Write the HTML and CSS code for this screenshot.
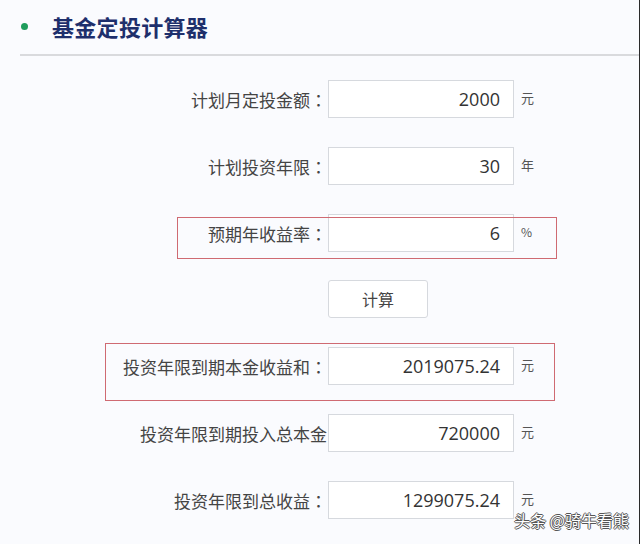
FILE: index.html
```html
<!DOCTYPE html>
<html>
<head>
    <meta charset="utf-8">
    <title>基金定投计算器</title>
    <link rel="stylesheet" href="styles.css">
</head>
<body>
    <div class="page">
        <div class="header">
            <span class="dot"></span>
            <h1>基金定投计算器</h1>
        </div>

        <div class="form">
            <div class="row">
                <label>计划月定投金额<span class="colon">：</span></label>
                <div class="field">2000</div>
                <span class="unit">元</span>
            </div>
            <div class="row">
                <label>计划投资年限<span class="colon">：</span></label>
                <div class="field">30</div>
                <span class="unit">年</span>
            </div>
            <div class="row">
                <span class="mark mark-rate"></span>
                <label>预期年收益率<span class="colon">：</span></label>
                <div class="field">6</div>
                <span class="unit unit-pct">%</span>
            </div>
            <div class="row row-btn">
                <button class="calc-btn">计算</button>
            </div>
            <div class="row">
                <span class="mark mark-total"></span>
                <label>投资年限到期本金收益和<span class="colon">：</span></label>
                <div class="field">2019075.24</div>
                <span class="unit">元</span>
            </div>
            <div class="row">
                <label>投资年限到期投入总本金</label>
                <div class="field">720000</div>
                <span class="unit">元</span>
            </div>
            <div class="row">
                <label>投资年限到总收益<span class="colon">：</span></label>
                <div class="field">1299075.24</div>
                <span class="unit">元</span>
            </div>
        </div>

        <div class="watermark">头条 @骑牛看熊</div>
    </div>
</body>
</html>
```

FILE: styles.css
```css
body { margin: 0; background: #fafbfe; font-family: "Open Sans", "Noto Sans CJK SC", sans-serif; color: #333; }
.page { position: relative; width: 639px; height: 544px; border-right: 1px solid #2a2a2a; overflow: hidden; }

.header { display: flex; align-items: center; height: 54px; margin-left: 20px; border-bottom: 2px solid #d9dadd; }
.dot { width: 7px; height: 7px; border-radius: 50%; background: #1f9d5c; margin-left: 1px; margin-top: -1px; }
.header h1 { margin: 0 0 0 24px; font-size: 22px; font-weight: bold; color: #1e2f6c; font-family: "Noto Sans CJK SC", sans-serif; letter-spacing: 0.3px; margin-top: -2px; }

.form { padding-top: 24px; }
.row { position: relative; display: flex; align-items: center; height: 38px; margin-bottom: 29px; }
.row label { width: 327px; text-align: right; font-size: 17px; color: #444; font-family: "Noto Sans CJK SC", sans-serif; }
.colon { font-family: "Noto Sans CJK TC", sans-serif; }
.field { box-sizing: border-box; width: 186px; height: 38px; margin-left: 1px; padding: 0 13px; background: #fff; border: 1px solid #d6d9de; text-align: right; font-size: 18px; line-height: 36px; color: #333; }
.unit { margin-left: 7px; font-size: 13px; color: #555; font-family: "Noto Sans CJK SC", sans-serif; margin-top: -4px; }
.unit-pct { font-size: 12px; }

.row-btn { margin-top: -1px; margin-bottom: 29px; }
.calc-btn { margin-left: 328px; width: 100px; height: 38px; background: #fff; border: 1px solid #d6d9de; border-radius: 3px; font-size: 16px; color: #444; font-family: "Noto Sans CJK SC", sans-serif; }

.mark { position: absolute; border: 1.5px solid #cf6a72; }
.mark-rate { left: 177px; top: 3px; width: 378px; height: 40px; }
.mark-total { left: 105px; top: -4px; width: 448px; height: 56px; }

.watermark { position: absolute; right: 10px; bottom: 12px; font-size: 16px; color: #fff; font-family: "Noto Sans CJK SC", sans-serif;
    text-shadow: -1px 0 #555, 1px 0 #555, 0 -1px #555, 0 1px #555; }
```
